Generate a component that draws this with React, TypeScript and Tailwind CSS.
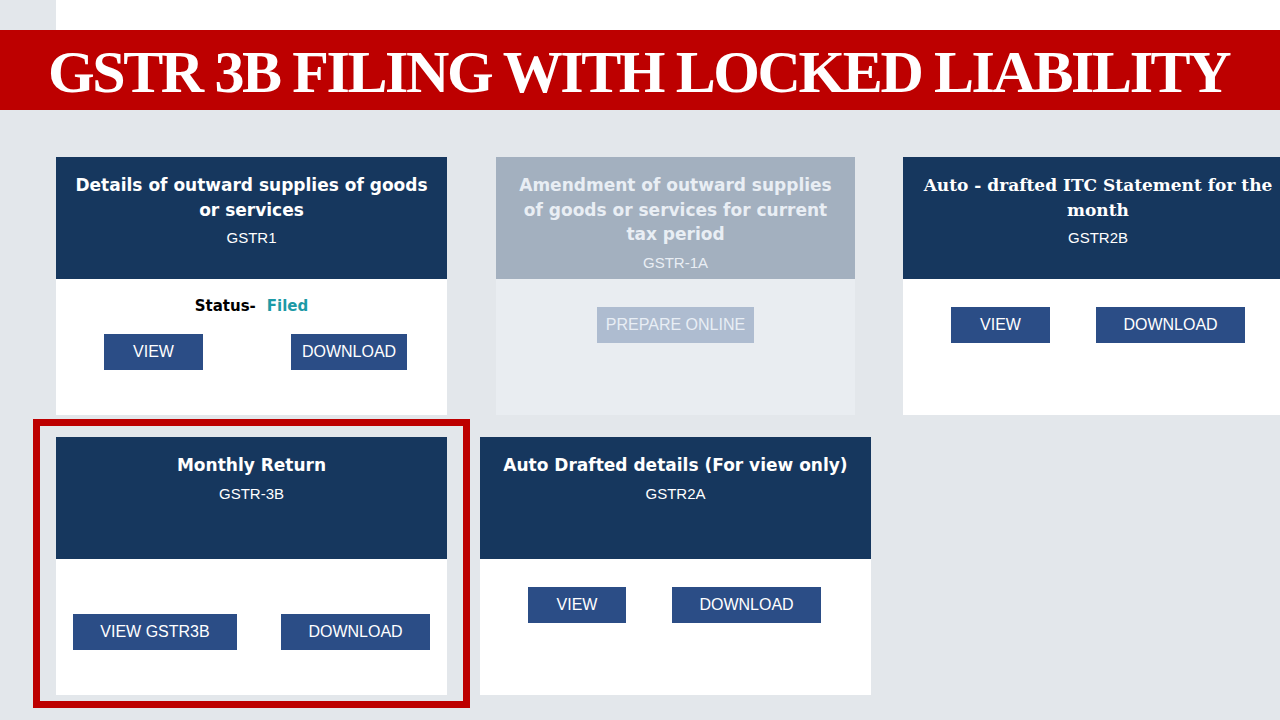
import React from 'react';

type Btn = { label: string; w: string };

interface CardProps {
  title: string[];
  code: string;
  width: string;
  serif?: boolean;
  disabled?: boolean;
  status?: string;
  bodyPad: string;
  rowPad: string;
  gap: string;
  buttons: Btn[];
}

const sans = { fontFamily: '"DejaVu Sans", Verdana, sans-serif' };
const arial = { fontFamily: '"Liberation Sans", Arial, sans-serif' };
const serif = { fontFamily: '"DejaVu Serif", Georgia, serif' };

const ReturnCard: React.FC<CardProps> = ({ title, code, width, serif: useSerif, disabled, status, bodyPad, rowPad, gap, buttons }) => {
  return (
    <div className={`${width} h-[258px] flex flex-col shrink-0`}>
      <div
        className={`h-[122px] flex flex-col items-center pt-[16px] text-center ${
          disabled ? 'bg-[#a3b0bf] text-[#e9eef4]' : 'bg-[#16375e] text-white'
        }`}
      >
        {title.map((line) => (
          <div
            key={line}
            className="text-[17px] leading-[24.5px] font-bold whitespace-nowrap"
            style={useSerif ? serif : sans}
          >
            {line}
          </div>
        ))}
        <div className="text-[15px] leading-[24px] mt-[4px]" style={arial}>
          {code}
        </div>
      </div>
      <div className={`flex-1 flex flex-col ${bodyPad} ${disabled ? 'bg-[#e9edf1]' : 'bg-white'}`}>
        {status && (
          <div className="flex justify-center items-center h-[24px] text-[15px] font-bold" style={sans}>
            <span className="text-black">Status-</span>
            <span className="ml-[11px] text-[#1d9aa6]">{status}</span>
          </div>
        )}
        <div className={`flex ${rowPad} ${gap} ${status ? 'mt-[16px]' : ''}`}>
          {buttons.map((b) => (
            <div
              key={b.label}
              className={`${b.w} h-[36px] flex items-center justify-center text-[16px] ${
                disabled ? 'bg-[#aebcd0] text-[#e8eef5]' : 'bg-[#2b4d86] text-white'
              }`}
              style={arial}
            >
              {b.label}
            </div>
          ))}
        </div>
      </div>
    </div>
  );
};

export default function App() {
  return (
    <div className="w-[1280px] h-[720px] overflow-hidden bg-[#e3e7eb]">
      <div className="h-[30px] flex">
        <div className="w-[56px]" />
        <div className="flex-1 bg-white" />
      </div>

      <div className="h-[80px] bg-[#bd0000] flex items-center pl-[48px]">
        <h1
          className="text-white text-[60px] leading-none font-bold tracking-[-2.4px] whitespace-nowrap pt-[4px]"
          style={{ fontFamily: '"Liberation Serif", "Times New Roman", serif' }}
        >
          GSTR 3B FILING WITH LOCKED LIABILITY
        </h1>
      </div>

      {/* first row of return tiles */}
      <div className="flex pl-[56px] pt-[47px]">
        <ReturnCard
          width="w-[391px]"
          title={['Details of outward supplies of goods', 'or services']}
          code="GSTR1"
          status="Filed"
          bodyPad="pt-[15px]"
          rowPad="pl-[48px]"
          gap="gap-[88px]"
          buttons={[
            { label: 'VIEW', w: 'w-[99px]' },
            { label: 'DOWNLOAD', w: 'w-[116px]' },
          ]}
        />
        <div className="w-[49px] shrink-0" />
        <ReturnCard
          width="w-[359px]"
          disabled
          title={['Amendment of outward supplies', 'of goods or services for current', 'tax period']}
          code="GSTR-1A"
          bodyPad="pt-[28px]"
          rowPad="justify-center"
          gap=""
          buttons={[{ label: 'PREPARE ONLINE', w: 'w-[157px]' }]}
        />
        <div className="w-[48px] shrink-0" />
        <ReturnCard
          width="w-[390px]"
          serif
          title={['Auto - drafted ITC Statement for the', 'month']}
          code="GSTR2B"
          bodyPad="pt-[28px]"
          rowPad="pl-[48px]"
          gap="gap-[46px]"
          buttons={[
            { label: 'VIEW', w: 'w-[99px]' },
            { label: 'DOWNLOAD', w: 'w-[149px]' },
          ]}
        />
      </div>

      {/* second row, GSTR-3B tile is outlined */}
      <div className="flex items-start pl-[33px] mt-[4px]">
        <div className="border-[7px] border-[#bd0000] pl-[16px] pr-[16px] pt-[11px] pb-[6px]">
          <ReturnCard
            width="w-[391px]"
            title={['Monthly Return']}
            code="GSTR-3B"
            bodyPad="pt-[55px]"
            rowPad="pl-[17px]"
            gap="gap-[44px]"
            buttons={[
              { label: 'VIEW GSTR3B', w: 'w-[164px]' },
              { label: 'DOWNLOAD', w: 'w-[149px]' },
            ]}
          />
        </div>
        <div className="ml-[10px] mt-[18px]">
          <ReturnCard
            width="w-[391px]"
            title={['Auto Drafted details (For view only)']}
            code="GSTR2A"
            bodyPad="pt-[28px]"
            rowPad="pl-[48px]"
            gap="gap-[46px]"
            buttons={[
              { label: 'VIEW', w: 'w-[98px]' },
              { label: 'DOWNLOAD', w: 'w-[149px]' },
            ]}
          />
        </div>
      </div>
    </div>
  );
}
